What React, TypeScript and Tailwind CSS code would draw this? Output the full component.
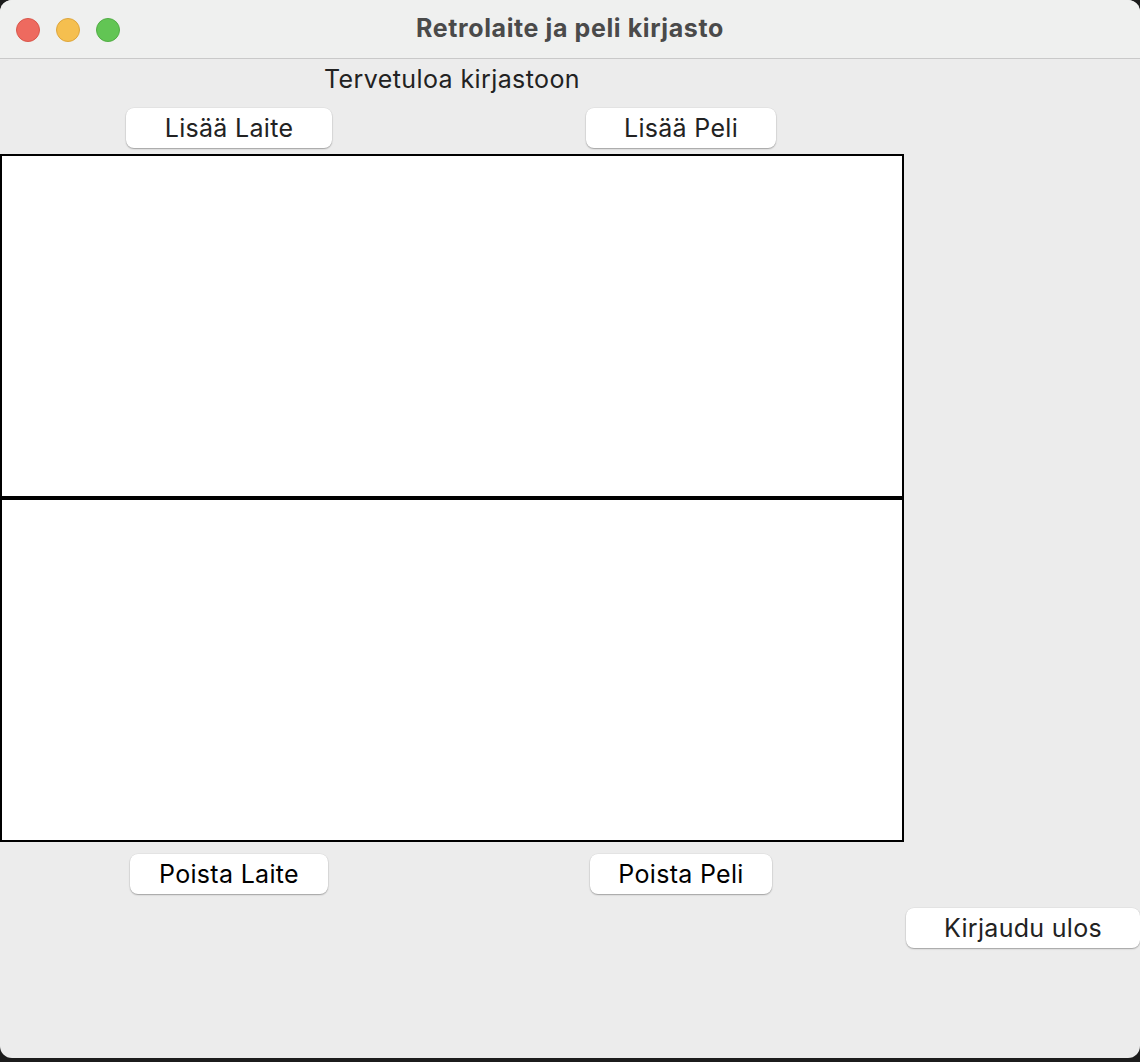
import React from "react";

const font = { fontFamily: "Inter, 'Liberation Sans', sans-serif" };

function MacButton({ label, className }: { label: string; className: string }) {
  return (
    <button
      className={`h-[40px] rounded-[8px] bg-white text-[25px] leading-none tracking-[0.3px] text-[#222] shadow-[0_1px_1.5px_rgba(0,0,0,0.3),0_0_0_0.5px_rgba(0,0,0,0.06)] ${className}`}
    >
      {label}
    </button>
  );
}

export default function App() {
  return (
    <div className="h-[1062px] w-[1140px] bg-[#1c1c1c]" style={font}>
      <div className="flex h-[1058px] w-full flex-col overflow-hidden rounded-[12px] bg-[#ececec]">
        {/* title bar */}
        <div className="relative flex h-[59px] shrink-0 items-center justify-center border-b border-[#c9c9c9] bg-[#eff0ef]">
          <div className="absolute left-[16px] top-[18px] flex gap-[16px]">
            <span className="h-[24px] w-[24px] rounded-full border border-[#d9574b] bg-[#ee6a5f]" />
            <span className="h-[24px] w-[24px] rounded-full border border-[#dea63c] bg-[#f5bf4f]" />
            <span className="h-[24px] w-[24px] rounded-full border border-[#52ad45] bg-[#62c554]" />
          </div>
          <span className="text-[25px] font-bold tracking-[0.6px] text-[#4a4a4a]">Retrolaite ja peli kirjasto</span>
        </div>

        {/* main column */}
        <div className="flex w-[904px] flex-col">
          <div className="flex h-[41px] items-center justify-center text-[25px] tracking-[0.4px] text-[#222]">
            Tervetuloa kirjastoon
          </div>
          <div className="mt-[8px] grid grid-cols-[458px_446px]">
            <div className="flex justify-center">
              <MacButton label="Lisää Laite" className="w-[206px]" />
            </div>
            <div className="flex justify-center">
              <MacButton label="Lisää Peli" className="w-[190px]" />
            </div>
          </div>
          <div className="mt-[6px] h-[344px] border-2 border-black bg-white" />
          <div className="h-[344px] border-2 border-black bg-white" />
          <div className="mt-[12px] grid grid-cols-[458px_446px]">
            <div className="flex justify-center">
              <MacButton label="Poista Laite" className="w-[198px] text-black" />
            </div>
            <div className="flex justify-center">
              <MacButton label="Poista Peli" className="w-[182px] text-black" />
            </div>
          </div>
        </div>

        {/* logout row */}
        <div className="mt-[14px] flex justify-end">
          <MacButton label="Kirjaudu ulos" className="w-[234px]" />
        </div>
      </div>
    </div>
  );
}
